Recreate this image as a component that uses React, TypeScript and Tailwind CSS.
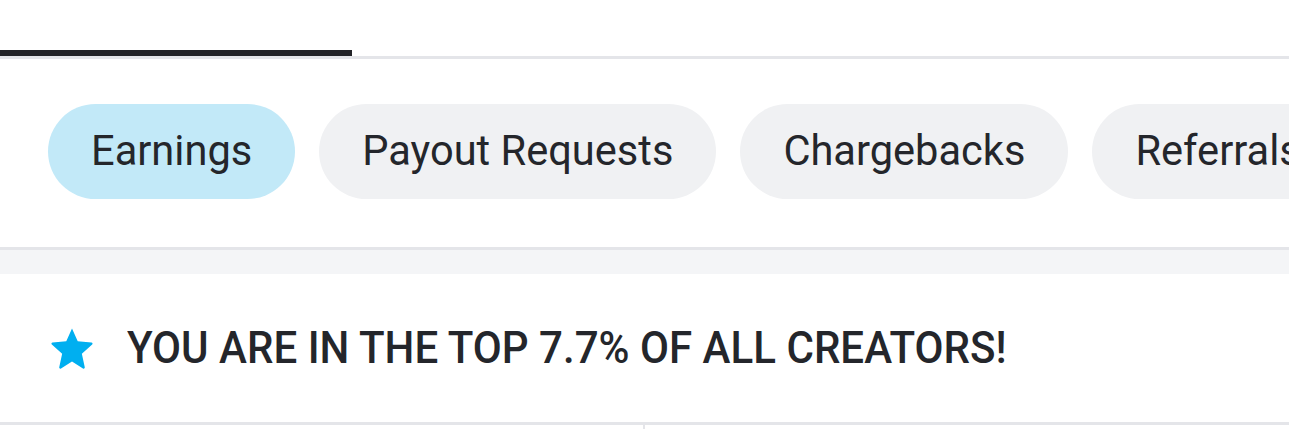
const tabs = ["Earnings", "Payout Requests", "Chargebacks", "Referrals"]

function Star() {
  return (
    <svg viewBox="0 0 24 24" className="h-[50px] w-[50px] shrink-0" fill="#00aff0">
      <path
        d="M12 2.6l2.75 6.1 6.6.65c.5.05.7.67.33 1l-4.95 4.4 1.4 6.5c.1.5-.43.88-.87.62L12 18.5l-5.26 3.37c-.44.26-.97-.12-.87-.62l1.4-6.5-4.95-4.4c-.37-.33-.17-.95.33-1l6.6-.65L12 2.6z"
        strokeLinejoin="round"
      />
    </svg>
  )
}

export default function App() {
  return (
    <div className="h-[429px] w-[1289px] overflow-hidden bg-white font-['Roboto',sans-serif] text-[#24262b]">
      <div className="h-[50px]" />
      <div className="h-[9px] border-b-[3px] border-[#e4e5e9]">
        <div className="h-[6px] w-[352px] bg-[#222327]" />
      </div>
      <div className="flex gap-[24px] overflow-hidden whitespace-nowrap pt-[45px] pb-[48px] pl-[48px]">
        {tabs.map((t, i) => (
          <div
            key={t}
            className={
              "flex h-[95px] shrink-0 items-center rounded-full px-[43px] text-[41.6px] " +
              (i === 0 ? "bg-[#c2e9f8]" : "bg-[#f0f1f3]")
            }
          >
            {t}
          </div>
        ))}
      </div>
      <div className="h-[27px] border-t-[3px] border-[#e4e5e9] bg-[#f4f5f7]" />
      <div className="flex h-[151px] items-center gap-[30px] border-b-[3px] border-[#e4e5e9] pl-[47px]">
        <Star />
        <div className="origin-left scale-x-[0.935] whitespace-nowrap text-[45px] font-medium">
          YOU ARE IN THE TOP 7.7% OF ALL CREATORS!
        </div>
      </div>
      <div className="flex h-[10px]">
        <div className="w-[645px] border-r-[2px] border-[#e4e5e9]" />
      </div>
    </div>
  )
}
